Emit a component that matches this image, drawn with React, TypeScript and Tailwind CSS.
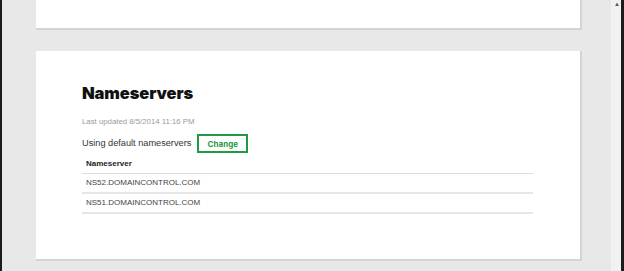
const servers = ["NS52.DOMAINCONTROL.COM", "NS51.DOMAINCONTROL.COM"];

function Card({ children, className = "" }: { children?: React.ReactNode; className?: string }) {
  return (
    <div
      className={`bg-white border-r-2 border-b-2 border-[#d4d4d4] ${className}`}
    >
      {children}
    </div>
  );
}

export default function App() {
  return (
    <div className="flex h-[271px] w-[624px] overflow-hidden bg-[#e8e8e8] font-['Liberation_Sans',Arial,sans-serif]">
      <div className="w-[2px] shrink-0 bg-[#1c1c1c]" />
      <div className="flex w-[609px] flex-col pl-[34px] pr-[29px]">
        <Card className="h-[30px]" />
        <Card className="mt-[21px] h-[210px] pl-[46px] pr-[45px] pt-[32px]">
          <h2 className="font-['Inter',sans-serif] text-[16.5px] font-black leading-[20px] tracking-[-0.1px] text-[#111]">
            Nameservers
          </h2>
          <p className="mt-[13px] text-[7.8px] leading-[12px] text-[#9a9a9a]">
            Last updated 8/5/2014 11:16 PM
          </p>
          <div className="mt-[6px] flex items-center gap-[6px]">
            <span className="text-[9.2px] text-[#333]">Using default nameservers</span>
            <button className="h-[19px] w-[51px] border-2 border-[#1f9a45] font-['Inter',sans-serif] text-[8px] font-bold text-[#1f9a45]">
              Change
            </button>
          </div>
          <div className="mt-[2px] w-[451px]">
            <div className="border-b border-[#dcdcdc] pl-[4px] pb-[3px] pt-[3px] text-[8px] font-bold leading-[12px] text-[#222]">
              Nameserver
            </div>
            {servers.map((s) => (
              <div
                key={s}
                className="border-b-2 border-[#e6e6e6] pl-[4px] py-[3px] text-[8px] leading-[12px] text-[#444]"
              >
                {s}
              </div>
            ))}
          </div>
        </Card>
      </div>
      <div className="relative w-[10px] shrink-0 bg-[#f1f1f1]">
        <span className="absolute left-[3px] top-[1px] text-[6px] leading-none text-[#555]">▲</span>
      </div>
      <div className="w-[3px] shrink-0 bg-[#1c1c1c]" />
    </div>
  );
}
